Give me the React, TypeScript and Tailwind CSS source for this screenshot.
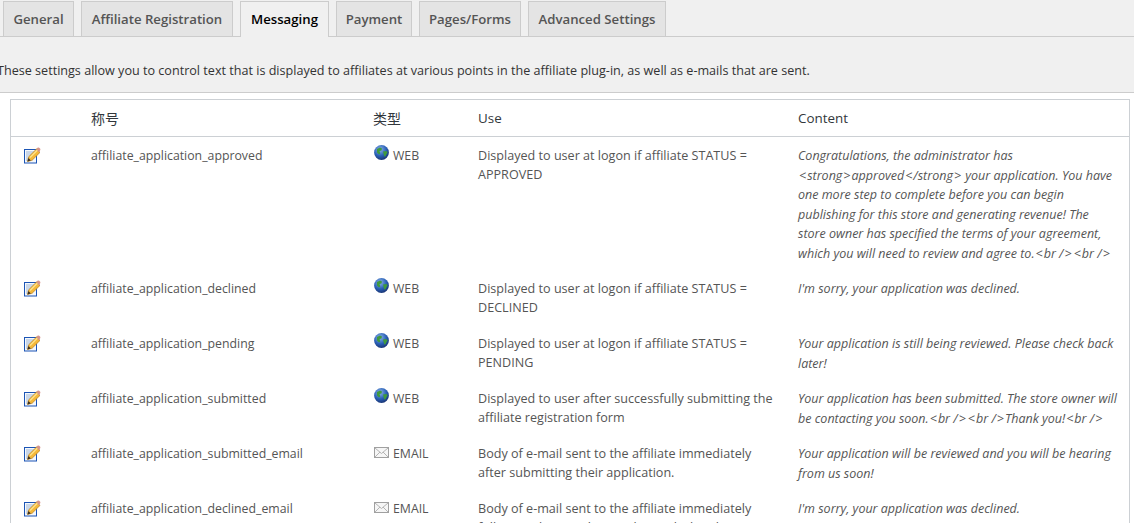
const tabs = ["General", "Affiliate Registration", "Messaging", "Payment", "Pages/Forms", "Advanced Settings"];
const tabWidths = ["w-[71px]", "w-[152px]", "w-[89px]", "w-[76px]", "w-[102px]", "w-[138px]"];

const rows = [
  {
    name: "affiliate_application_approved",
    type: "WEB",
    use: "Displayed to user at logon if affiliate STATUS = APPROVED",
    content: [
      "Congratulations, the administrator has",
      "<strong>approved</strong> your application. You have",
      "one more step to complete before you can begin",
      "publishing for this store and generating revenue! The",
      "store owner has specified the terms of your agreement,",
      "which you will need to review and agree to.<br /><br />",
    ],
  },
  { name: "affiliate_application_declined", type: "WEB", use: "Displayed to user at logon if affiliate STATUS = DECLINED", content: ["I'm sorry, your application was declined."] },
  { name: "affiliate_application_pending", type: "WEB", use: "Displayed to user at logon if affiliate STATUS = PENDING", content: ["Your application is still being reviewed. Please check back", "later!"] },
  { name: "affiliate_application_submitted", type: "WEB", use: "Displayed to user after successfully submitting the affiliate registration form", content: ["Your application has been submitted. The store owner will", "be contacting you soon.<br /><br />Thank you!<br />"] },
  { name: "affiliate_application_submitted_email", type: "EMAIL", use: "Body of e-mail sent to the affiliate immediately after submitting their application.", content: ["Your application will be reviewed and you will be hearing", "from us soon!"] },
  { name: "affiliate_application_declined_email", type: "EMAIL", use: "Body of e-mail sent to the affiliate immediately following their application being declined.", content: ["I'm sorry, your application was declined."] },
];

function EditIcon() {
  return (
    <svg width="17" height="17" viewBox="0 0 17 17" className="block">
      <rect x="0.5" y="2.5" width="12" height="13.5" fill="#f4f8fd" stroke="#1c55b5" />
      <path d="M2 5h8M2 7h7M2 9h5M2 11h3M2 13h2" stroke="#9fb4d0" strokeWidth="1" />
      <path d="M3.5 14.5l1.2-4.7L12.5 2l3.5 3.4-7.8 7.8z" fill="#f5b93a" stroke="#b8801f" strokeWidth="0.7" />
      <path d="M5.5 10l7.5-7.5 1 1L6.5 11z" fill="#fde28a" />
      <path d="M12.5 2l1-1.2c.7-.5 1.9-.1 2.5.6.5.6.5 1.4 0 2l-1 2z" fill="#d6948a" />
      <path d="M3.5 14.5l.9-3.4 2.4 2.3z" fill="#3a3024" />
    </svg>
  );
}

function GlobeIcon() {
  return (
    <svg width="15" height="15" viewBox="0 0 15 15" className="block">
      <defs>
        <radialGradient id="g" cx="40%" cy="30%" r="75%">
          <stop offset="0%" stopColor="#8fb4e8" />
          <stop offset="55%" stopColor="#2b62b8" />
          <stop offset="100%" stopColor="#17306e" />
        </radialGradient>
      </defs>
      <circle cx="7.5" cy="7.5" r="7.4" fill="url(#g)" />
      <path d="M3 4l3-1.5 2 1-.5 2-2 .5.8 2.5-1.3 1L3 7.5z" fill="#3f9a3c" />
      <path d="M9 6.5l3.5-.5 1 1.5-1.2 2-1.3 2.5-1-1.5z" fill="#3f9a3c" />
    </svg>
  );
}

function MailIcon() {
  return (
    <svg width="15" height="11" viewBox="0 0 15 11" className="block">
      <rect x="0.5" y="0.5" width="14" height="10" fill="#f6f6f6" stroke="#a0a0a0" />
      <path d="M1 1l6.5 5.5L14 1M1 10l5-5M14 10l-5-5" fill="none" stroke="#b4b4b4" />
    </svg>
  );
}

function ContentLine({ text }: { text: string }) {
  return (
    <div className="whitespace-nowrap">
      {text.split(/([<>])/).map((part, i) =>
        part === "<" || part === ">" ? (
          <span key={i} className="mx-px">{part}</span>
        ) : (
          part
        )
      )}
    </div>
  );
}

export default function App() {
  return (
    <div className="h-[523px] w-[1134px] overflow-hidden bg-white text-[12.5px] leading-[19.5px] text-[#555]" style={{ fontFamily: '"Open Sans", "Noto Sans CJK SC", sans-serif' }}>
      <div className="bg-[#f0f0f0]">
        <div className="flex h-[37px] items-end gap-[7px] border-b border-[#ccc] pl-[3px]">
          {tabs.map((t, i) => (
            <div
              key={t}
              className={`${tabWidths[i]} flex items-center justify-center border border-[#ccc] pt-px text-[13.2px] font-semibold ${t === "Messaging" ? "relative top-px h-[36px] border-b-0 bg-[#f0f0f0] pb-px text-[#000]" : "h-[35px] border-b-0 bg-[#e4e4e4] text-[#555]"}`}
            >
              {t}
            </div>
          ))}
        </div>
        <p className="ml-[-3px] flex h-[56px] items-center border-b border-[#ccc] pt-[12px] text-[12.6px] text-[#333]">
          These settings allow you to control text that is displayed to affiliates at various points in the affiliate plug-in, as well as e-mails that are sent.
        </p>
      </div>
      <div className="mt-[6px] ml-[10px] mr-[4px] border border-[#ccd0d4]">
        <div className="grid h-[37px] grid-cols-[80px_282px_105px_320px_1fr] items-center border-b border-[#ccd0d4] pt-[2px] text-[13.4px] text-[#32373c]">
          <div />
          <div className="-mt-px text-[14px]">称号</div>
          <div className="-mt-px text-[14px]">类型</div>
          <div>Use</div>
          <div>Content</div>
        </div>
        {rows.map((r) => (
          <div key={r.name} className="grid min-h-[55px] grid-cols-[80px_282px_105px_320px_1fr] pt-[9px] pb-[7px]">
            <div className="pt-[1px] pl-[13px]"><EditIcon /></div>
            <div className="text-[12.3px]">{r.name}</div>
            <div className="flex items-start gap-1 pl-px text-[12.3px]">
              <span className={r.type === "WEB" ? "-mt-px" : "pt-[3px]"}>{r.type === "WEB" ? <GlobeIcon /> : <MailIcon />}</span>
              <span>{r.type}</span>
            </div>
            <div className="pr-5 text-[12.6px] leading-[19px]">{r.use}</div>
            <div className="text-[12.5px] italic">
              {r.content.map((line) => <ContentLine key={line} text={line} />)}
            </div>
          </div>
        ))}
      </div>
    </div>
  );
}
